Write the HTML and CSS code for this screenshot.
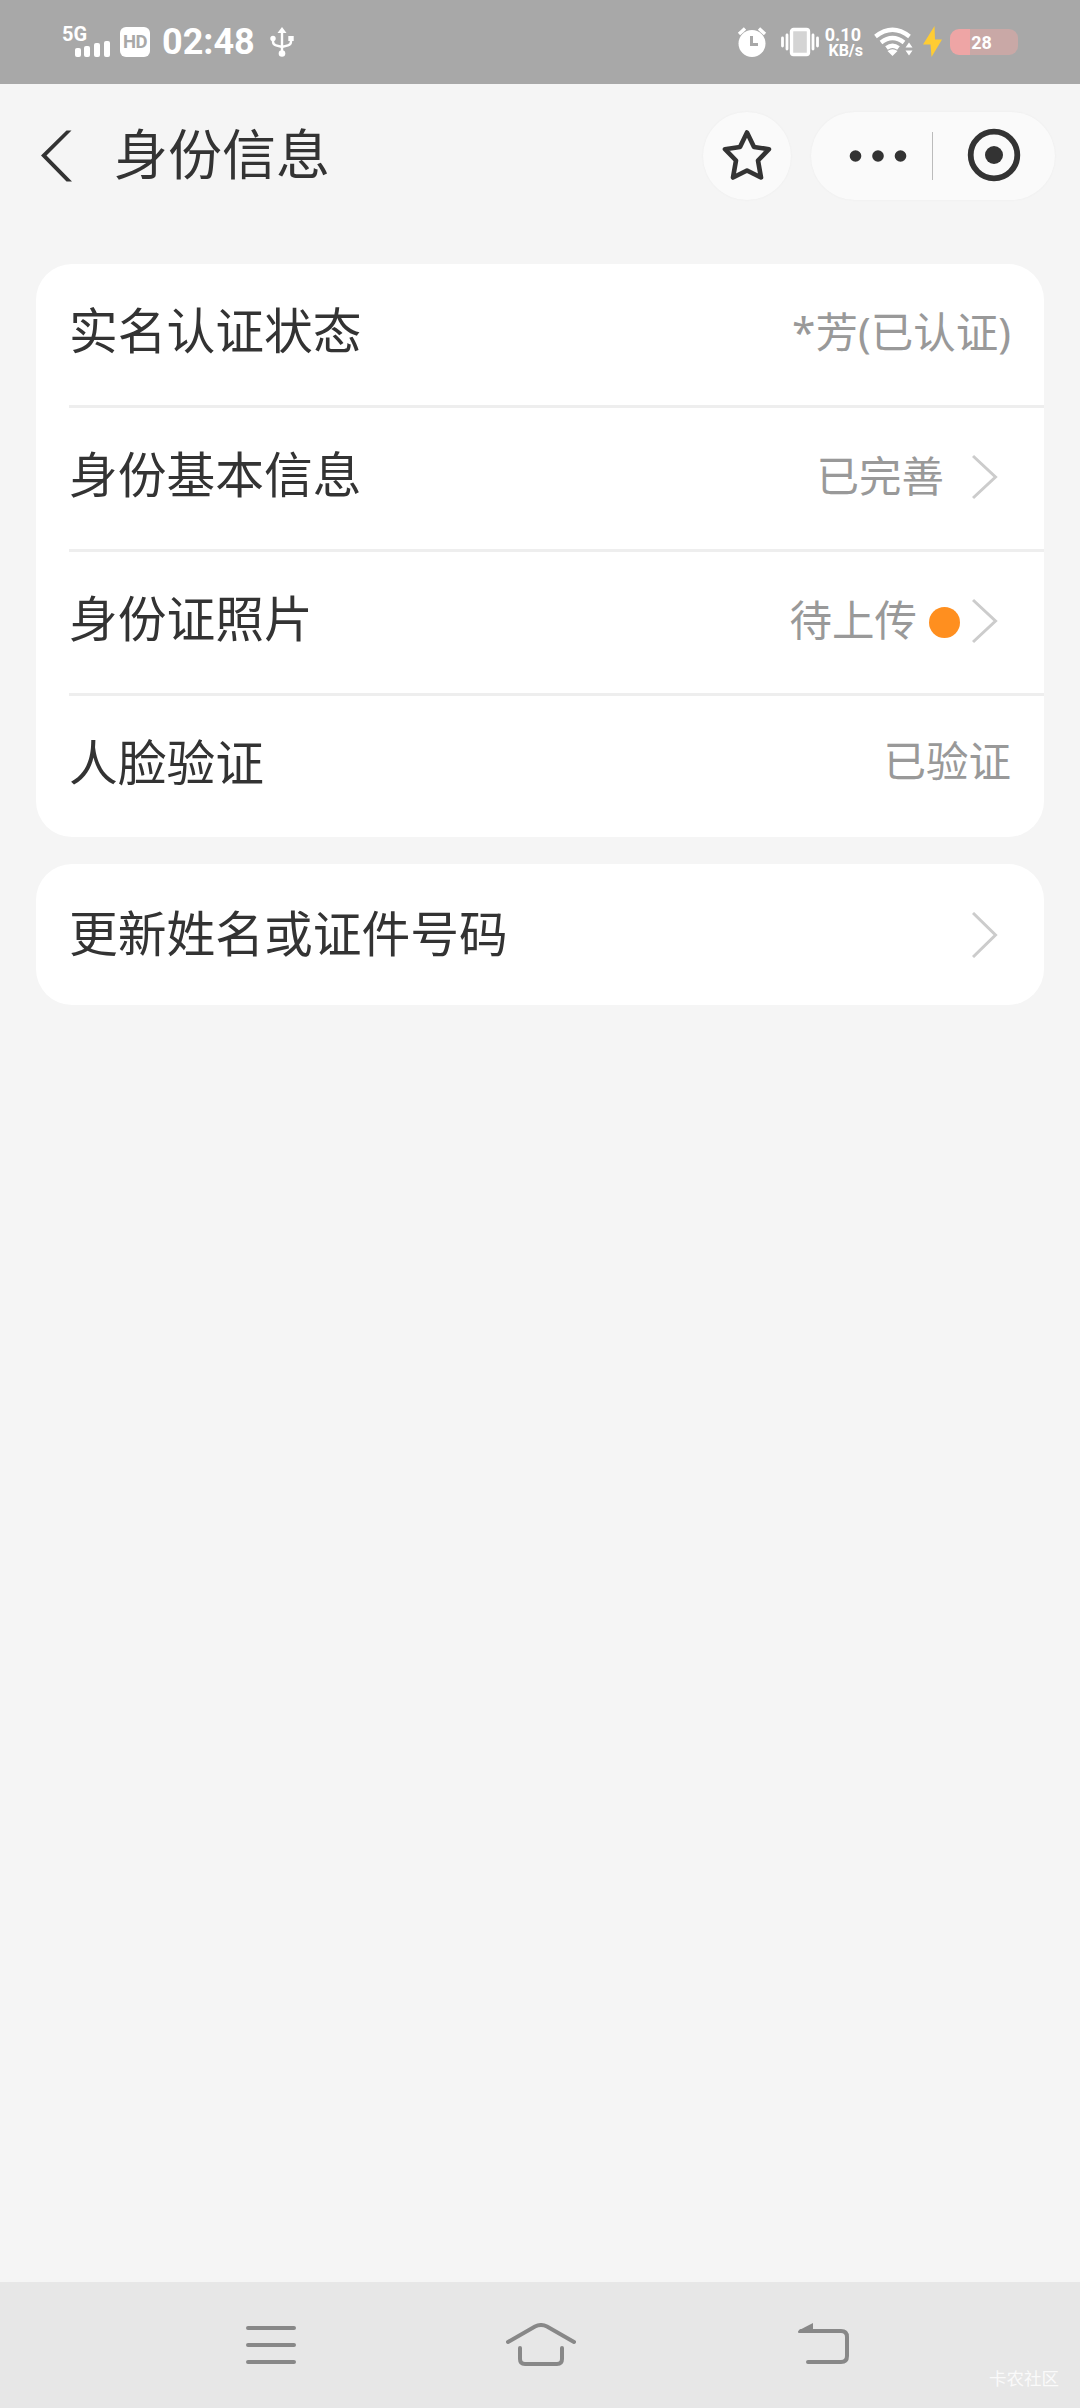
FILE: index.html
```
<!DOCTYPE html>
<html lang="zh-CN">
<head>
  <meta charset="UTF-8" />
  <meta name="viewport" content="width=device-width, initial-scale=1" />
  <title>身份信息</title>
  <link rel="stylesheet" href="styles.css">
</head>
<body>

<div class="status-bar">
  <div class="signal">
    <span class="signal-text">5G</span>
    <svg width="36" height="17" viewBox="0 0 36 17" fill="#fff">
      <rect x="0" y="8" width="6" height="9" rx="2" />
      <rect x="9" y="6" width="6" height="11" rx="2" />
      <rect x="19" y="3" width="6" height="14" rx="2" />
      <rect x="29" y="1" width="6" height="16" rx="2" />
    </svg>
  </div>
  <span class="hd">HD</span>
  <span class="time">02:48</span>
  <svg class="usb" width="24" height="32" viewBox="0 0 24 32" fill="none" stroke="#fff" stroke-width="2.4">
    <path d="M12 6v20M3 12v3.500q0 3 3 3.800l6 1.700 6-1.700q3-.8 3-3.800V12" />
    <path d="M12 1l4.500 6h-9z" fill="#fff" stroke="none" />
    <circle cx="12" cy="27.500" r="3.300" fill="#fff" stroke="none" />
    <circle cx="3" cy="12.500" r="2.700" fill="#fff" stroke="none" />
    <rect x="18.300" y="10" width="5.400" height="5" fill="#fff" stroke="none" />
  </svg>

  <div class="status-right">
    <svg class="alarm" width="30" height="32" viewBox="0 0 30 32" fill="none" stroke="#fff">
      <circle cx="15" cy="17.500" r="13.500" fill="#fff" stroke="none" />
      <path d="M2 8l6-5.500M28 8l-6-5.500" stroke-width="3.400" />
      <path d="M14.500 10v8.500h6.500" stroke="#a8a8a8" stroke-width="3" />
    </svg>
    <svg class="vibrate" width="38" height="30" viewBox="0 0 38 30" fill="none" stroke="#fff">
      <rect x="10.500" y="2.500" width="17" height="25" rx="2" fill="#d4d4d4" stroke-width="3.400" />
      <path d="M1.500 11v8M36.500 11v8M6 8v14M32 8v14" stroke-width="2.800" stroke-linecap="round" />
    </svg>
    <div class="speed">
      <span class="speed-num">0.10</span>
      <span class="speed-unit">KB/s</span>
    </div>
    <svg class="wifi" width="40" height="32" viewBox="0 0 40 32" fill="none" stroke="#fff" stroke-width="4.300">
      <path d="M1.500 10.500q17-13.500 34 0" />
      <path d="M7 16.500q11.500-9 23 0" />
      <path d="M12.500 22q6-4.500 12 0" />
      <path d="M13.500 25q5-3.500 10 0l-5 5z" fill="#fff" stroke="none" />
      <path d="M31.500 21.500l3.500-5 3.500 5zM31.500 24.500l3.500 5 3.500-5z" fill="#fff" stroke="none" />
    </svg>
    <svg class="bolt" width="20" height="32" viewBox="0 0 20 32" fill="#fc3">
      <path d="M11.500 0L0 18.500h7.500L8.500 31 19 13.500h-7z" />
    </svg>
    <div class="battery"><span>28</span></div>
  </div>
</div>

<div class="header">
  <svg class="back" width="34" height="54" viewBox="0 0 34 54" fill="#333">
    <path d="M26.500 1.500h5L6.500 26.500 32 52.500h-5.500L1 26.500z" />
  </svg>
  <h1>身份信息</h1>
  <div class="star">
    <svg width="52" height="54" viewBox="0 0 52 54" fill="none" stroke="#333" stroke-width="4.600" stroke-linejoin="round">
      <path d="M26 4.500L33 19 48 21.200 37 32.500 40 49.500 26 42.500 12 49.500 15 32.500 4 21.200 19 19z" />
    </svg>
  </div>
  <div class="capsule">
    <svg class="dots" width="58" height="14" viewBox="0 0 58 14" fill="#333">
      <circle cx="6.500" cy="7" r="5.800" />
      <circle cx="29" cy="7" r="5.800" />
      <circle cx="51.500" cy="7" r="5.800" />
    </svg>
    <span class="line"></span>
    <svg class="close" width="54" height="54" viewBox="0 0 54 54">
      <circle cx="27" cy="27" r="23.300" fill="none" stroke="#333" stroke-width="5.800" />
      <circle cx="27" cy="27" r="9" fill="#333" />
    </svg>
  </div>
</div>

<div class="card">
  <div class="row">
    <span class="label">实名认证状态</span>
    <span class="value">*芳(已认证)</span>
  </div>
  <div class="row">
    <span class="label">身份基本信息</span>
    <span class="value">已完善</span>
    <svg class="arrow" width="26" height="46" viewBox="0 0 26 46"><path d="M1 2l22.500 21L1 44" /></svg>
  </div>
  <div class="row">
    <span class="label">身份证照片</span>
    <span class="value">待上传</span>
    <span class="dot"></span>
    <svg class="arrow" width="26" height="46" viewBox="0 0 26 46"><path d="M1 2l22.500 21L1 44" /></svg>
  </div>
  <div class="row">
    <span class="label">人脸验证</span>
    <span class="value">已验证</span>
  </div>
</div>

<div class="card">
  <div class="row single">
    <span class="label">更新姓名或证件号码</span>
    <svg class="arrow" width="26" height="46" viewBox="0 0 26 46"><path d="M1 1l22.500 22L1 45" /></svg>
  </div>
</div>

<div class="nav-bar">
  <svg class="nav-menu" width="50" height="44" viewBox="0 0 50 44">
    <path d="M2 5h46M2 22h46M2 39h46" />
  </svg>
  <svg class="nav-home" width="70" height="44" viewBox="0 0 70 44">
    <path d="M2 19L29 3.500q6-3 12 0L68 19" />
    <path d="M14 25v11q0 5 5 5h32q5 0 5-5V25" />
  </svg>
  <svg class="nav-back" width="54" height="44" viewBox="0 0 54 44">
    <path d="M4 8h40q6 0 6 6v19q0 6-6 6H11" />
    <path class="tip" d="M1 9q0-1 1-1.700L16 0v10H2q-1 0-1-1z" />
  </svg>
  <span class="watermark">卡农社区</span>
</div>

</body>
</html>
```
FILE: styles.css
```
* {
  box-sizing: border-box;
}

body {
  margin: 0;
  min-height: 2408px;
  display: flex;
  flex-direction: column;
  background: #f5f5f5;
  color: #333;
  font-family: "Noto Sans", "Noto Sans CJK SC", sans-serif;
}

svg {
  display: block;
  flex: none;
}

/* status bar */
.status-bar {
  height: 84px;
  padding: 0 62px;
  display: flex;
  align-items: center;
  background: #a8a8a8;
  color: #fff;
  font-family: Roboto, sans-serif;
  font-weight: bold;
}

.signal {
  width: 48px;
  display: flex;
  flex-direction: column;
  margin-bottom: 6px;
}

.signal-text {
  font-size: 20px;
  line-height: 24px;
}

.signal svg {
  margin: -6px 0 0 13px;
}

.hd {
  width: 30px;
  height: 30px;
  margin-left: 10px;
  border-radius: 6px;
  background: #fff;
  color: #a8a8a8;
  font-size: 18.500px;
  letter-spacing: -0.5px;
  line-height: 31px;
  text-align: center;
}

.time {
  margin-left: 12px;
  font-size: 36px;
  line-height: 42px;
}

.usb {
  margin-left: 15px;
}

.status-right {
  display: flex;
  align-items: center;
  margin-left: auto;
}

.vibrate {
  margin-left: 14px;
}

.speed {
  width: 38px;
  margin-left: 6px;
  display: flex;
  flex-direction: column;
  align-items: flex-end;
}

.speed-num {
  margin-right: 2px;
  font-size: 18px;
  line-height: 16px;
}

.speed-unit {
  font-size: 16px;
  line-height: 15px;
}

.wifi {
  margin-left: 11px;
}

.bolt {
  margin-left: 9px;
}

.battery {
  width: 68px;
  height: 26px;
  margin-left: 7px;
  border-radius: 9px;
  background: linear-gradient(to right, #eea5a5 20px, #c9a8a6 20px);
  font-size: 18px;
  line-height: 27px;
  text-align: center;
  padding-right: 5px;
}

/* title bar */
.header {
  height: 180px;
  padding: 28px 25px 64px 40px;
  display: flex;
  align-items: center;
}

.header h1 {
  margin: 0 auto 0 40px;
  font-size: 54px;
  font-weight: normal;
  line-height: 88px;
  padding-bottom: 4px;
}

.star {
  width: 88px;
  height: 88px;
  display: flex;
  align-items: center;
  justify-content: center;
  border-radius: 50%;
  background: #fafafa;
  box-shadow: 0 0 2px #eaeaea;
}

.star svg {
  margin-bottom: 2px;
}

.capsule {
  width: 244px;
  height: 88px;
  margin-left: 20px;
  display: flex;
  align-items: center;
  border-radius: 44px;
  background: #fafafa;
  box-shadow: 0 0 2px #eaeaea;
}

.dots {
  margin-left: 38px;
}

.line {
  width: 1px;
  height: 48px;
  margin-left: 25px;
  background: #bbb;
}

.close {
  margin-left: 34px;
  margin-bottom: 2px;
}

/* cards */
.card {
  margin: 0 36px 27px;
  padding-left: 33px;
  border-radius: 36px;
  background: #fff;
}

.row {
  height: 144px;
  padding-right: 33px;
  display: flex;
  align-items: center;
  border-bottom: 3px solid #eee;
}

.row:last-child {
  height: 141px;
  border-bottom: none;
}

.label {
  margin-right: auto;
  padding-bottom: 9px;
  font-size: 48.750px;
  line-height: 72px;
}

.single .label {
  padding-bottom: 3px;
}

.value {
  padding-bottom: 5px;
  color: #999;
  font-size: 42.500px;
  line-height: 64px;
}

.row:last-child .value {
  padding-bottom: 11px;
}

.dot {
  width: 31px;
  height: 31px;
  margin: 0 -16px 1px 12px;
  border-radius: 50%;
  background: #ff8f1f;
}

.arrow {
  margin-left: 28px;
  margin-right: 13px;
  margin-bottom: 3px;
  fill: none;
  stroke: #ccc;
  stroke-width: 3px;
}

.single .arrow {
  margin-bottom: 0;
}

/* system navigation */
.nav-bar {
  position: relative;
  height: 126px;
  margin-top: auto;
  padding-left: 246px;
  display: flex;
  align-items: center;
  background: #e7e7e7;
}

.nav-bar svg {
  fill: none;
  stroke: #888;
  stroke-width: 4px;
  stroke-linecap: round;
}

.nav-bar .tip {
  fill: #888;
  stroke: none;
}

.nav-home {
  margin-left: 210px;
}

.nav-back {
  margin-left: 221px;
}

.watermark {
  position: absolute;
  right: 21px;
  bottom: 17px;
  color: #fafafa;
  font-size: 17.500px;
  line-height: 26px;
}
```
